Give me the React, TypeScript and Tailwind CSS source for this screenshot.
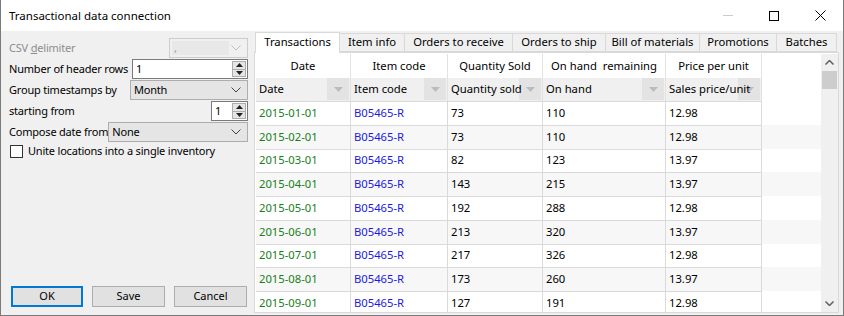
import React from 'react';

const rows = [
  ['2015-01-01', 'B05465-R', '73', '110', '12.98'],
  ['2015-02-01', 'B05465-R', '73', '110', '12.98'],
  ['2015-03-01', 'B05465-R', '82', '123', '13.97'],
  ['2015-04-01', 'B05465-R', '143', '215', '13.97'],
  ['2015-05-01', 'B05465-R', '192', '288', '12.98'],
  ['2015-06-01', 'B05465-R', '213', '320', '13.97'],
  ['2015-07-01', 'B05465-R', '217', '326', '12.98'],
  ['2015-08-01', 'B05465-R', '173', '260', '13.97'],
  ['2015-09-01', 'B05465-R', '127', '191', '12.98'],
];

const cols = [
  { group: 'Date', name: 'Date', w: 'w-[95px]' },
  { group: 'Item code', name: 'Item code', w: 'w-[97px]' },
  { group: 'Quantity Sold', name: 'Quantity sold', w: 'w-[95px]' },
  { group: 'On hand  remaining', name: 'On hand', w: 'w-[123px]' },
  { group: 'Price per unit', name: 'Sales price/unit', w: 'w-[96px]' },
];

const tabs = [
  { label: 'Item info', w: 'w-[65px]' },
  { label: 'Orders to receive', w: 'w-[108px]' },
  { label: 'Orders to ship', w: 'w-[93px]' },
  { label: 'Bill of materials', w: 'w-[94px]' },
  { label: 'Promotions', w: 'w-[77px]' },
  { label: 'Batches', w: 'w-[60px]' },
];

function Chevron({ color = '#444' }: { color?: string }) {
  return (
    <svg width="10" height="6" viewBox="0 0 10 6" fill="none">
      <path d="M0.5 0.5 L5 5 L9.5 0.5" stroke={color} strokeWidth="1" />
    </svg>
  );
}

function Combo({ value, w, disabled }: { value: string; w: string; disabled?: boolean }) {
  if (disabled) {
    return (
      <div className={`${w} h-[20px] border border-[#cccccc] bg-[#f0f0f0] flex items-center pl-[2px] pr-[6px]`}>
        <div className="w-[57px] h-[14px] bg-[#e8e8e8] text-[#a0a0a0] leading-[14px] pl-[2px]">{value}</div>
        <div className="ml-auto">
          <Chevron color="#c0c0c0" />
        </div>
      </div>
    );
  }
  return (
    <div className={`${w} h-[20px] border border-[#adadad] bg-[#e5e5e5] flex items-center pl-[3px] pr-[6px]`}>
      <span>{value}</span>
      <div className="ml-auto">
        <Chevron />
      </div>
    </div>
  );
}

function Spin({ value, w }: { value: string; w: string }) {
  return (
    <div className={`${w} h-[20px] border border-[#7a7a7a] bg-white flex items-center pl-[3px]`}>
      <span>{value}</span>
      <div className="ml-auto h-[16px] w-[14px] mr-[1px] flex flex-col border border-[#adadad] bg-[#e5e5e5]">
        <div className="flex-1 flex items-center justify-center border-b border-[#adadad]">
          <svg width="7" height="4" viewBox="0 0 7 4"><path d="M0 4 L3.5 0 L7 4 Z" fill="#222" /></svg>
        </div>
        <div className="flex-1 flex items-center justify-center">
          <svg width="7" height="4" viewBox="0 0 7 4"><path d="M0 0 L3.5 4 L7 0 Z" fill="#222" /></svg>
        </div>
      </div>
    </div>
  );
}

function FilterBtn() {
  return (
    <div className="absolute right-[1px] top-0 bottom-[1px] w-[22px] bg-[#e3e3e3] flex items-center justify-center">
      <svg width="9" height="5" viewBox="0 0 9 5"><path d="M0 0 L4.5 5 L9 0 Z" fill="#bcbcbc" /></svg>
    </div>
  );
}

export default function App() {
  return (
    <div
      className="w-[844px] h-[316px] flex flex-col bg-[#f0f0f0] border-x border-b border-[#7b7b7b] text-[11.25px] text-black overflow-hidden whitespace-nowrap"
      style={{ fontFamily: '"Segoe UI", "Noto Sans", sans-serif' }}
    >
      {/* Title bar */}
      <div className="h-[31px] shrink-0 bg-white flex items-center">
        <span className="pl-[8px] text-[11.5px]">Transactional data connection</span>
        <div className="ml-auto flex h-full">
          <div className="w-[46px] flex items-center justify-center">
            <svg width="10" height="1"><rect width="10" height="1" fill="#cccccc" /></svg>
          </div>
          <div className="w-[46px] flex items-center justify-center">
            <svg width="10" height="10" viewBox="0 0 10 10"><rect x="0.5" y="0.5" width="9" height="9" fill="none" stroke="#000" /></svg>
          </div>
          <div className="w-[46px] flex items-center justify-center">
            <svg width="11" height="11" viewBox="0 0 11 11"><path d="M0.5 0.5 L10.5 10.5 M10.5 0.5 L0.5 10.5" stroke="#000" strokeWidth="1" /></svg>
          </div>
        </div>
      </div>

      <div className="flex flex-1 min-h-0">
        {/* Left panel */}
        <div className="w-[253px] shrink-0 flex flex-col pl-[8px] pr-[6px] pt-[7px] pb-[6px] text-[11px] tracking-[-0.2px]">
          <div className="flex flex-col gap-[1px]">
            <div className="flex items-center justify-between h-[20px]">
              <span className="text-[#8d8d8d]">
                CSV <span className="underline">d</span>elimiter
              </span>
              <Combo value="," w="w-[79px]" disabled />
            </div>
            <div className="flex items-center justify-between h-[20px]">
              <span>Number of header rows</span>
              <Spin value="1" w="w-[116px]" />
            </div>
            <div className="flex items-center justify-between h-[20px]">
              <span>Group timestamps by</span>
              <Combo value="Month" w="w-[118px]" />
            </div>
            <div className="flex items-center justify-between h-[20px]">
              <span>starting from</span>
              <Spin value="1" w="w-[37px]" />
            </div>
            <div className="flex items-center justify-between h-[20px]">
              <span>Compose date from</span>
              <Combo value="None" w="w-[142px]" />
            </div>
          </div>
          <div className="flex items-center mt-[1px] h-[17px]">
            <div className="w-[13px] h-[13px] border border-[#333] bg-white ml-[1px]" />
            <span className="ml-[5px]">Unite locations into a single inventory</span>
          </div>
          <div className="mt-auto flex gap-[9px] pl-[2px] pb-[2px] tracking-normal">
            <button className="w-[72px] h-[21px] border-2 border-[#0078d7] bg-[#e1e1e1]">OK</button>
            <button className="w-[73px] h-[21px] border border-[#adadad] bg-[#e1e1e1]">Save</button>
            <button className="w-[73px] h-[21px] border border-[#adadad] bg-[#e1e1e1]">Cancel</button>
          </div>
        </div>

        {/* Right tab control */}
        <div className="flex-1 flex flex-col pr-[4px] pb-[2px] min-w-0">
          <div className="flex items-end h-[21px] shrink-0 pl-[1px]">
            <div className="w-[85px] h-[21px] bg-white border border-b-0 border-[#d9d9d9] flex items-center justify-center relative z-10 -mb-px pb-[2px]">
              Transactions
            </div>
            {tabs.map((t) => (
              <div
                key={t.label}
                className={`${t.w} h-[19px] bg-[#f0f0f0] border border-l-0 border-[#d9d9d9] flex items-center justify-center`}
              >
                {t.label}
              </div>
            ))}
          </div>
          <div className="flex-1 min-h-0 bg-white border border-[#d9d9d9] flex pl-[1px] pt-[1px]">
            <div className="flex-1 min-w-0 overflow-hidden">
              {/* group header */}
              <div className="flex h-[24px]">
                {cols.map((c) => (
                  <div key={c.group} className={`${c.w} shrink-0 flex items-center justify-center border-r border-[#e2e2e2] whitespace-pre`}>
                    {c.group}
                  </div>
                ))}
              </div>
              {/* column header */}
              <div className="flex h-[23px]">
                {cols.map((c) => (
                  <div key={c.name} className={`${c.w} shrink-0 relative flex items-center pl-[3px] bg-[#f0f0f0] border-r border-[#e2e2e2]`}>
                    <FilterBtn />
                    <span className="relative z-10">{c.name}</span>
                  </div>
                ))}
              </div>
              {rows.map((r, i) => (
                <div key={i} className={`flex h-[23.75px] ${i % 2 === 1 ? 'bg-[#f7f7f7]' : 'bg-white'}`}>
                  {r.map((v, j) => (
                    <div
                      key={j}
                      className={`${cols[j].w} shrink-0 flex items-center pl-[3px] border-t border-r border-[#dadada] ${
                        j === 0 ? 'text-[#188018]' : j === 1 ? 'text-[#1a1ae6]' : ''
                      }`}
                    >
                      {v}
                    </div>
                  ))}
                </div>
              ))}
            </div>
            {/* scrollbar */}
            <div className="w-[17px] shrink-0 bg-[#f0f0f0] flex flex-col items-center">
              <div className="h-[17px] w-full flex items-center justify-center">
                <svg width="9" height="5" viewBox="0 0 9 5"><path d="M0.5 4.5 L4.5 0.5 L8.5 4.5" stroke="#606060" strokeWidth="1.5" fill="none" /></svg>
              </div>
              <div className="w-[15px] h-[18px] bg-[#cdcdcd]" />
              <div className="mt-auto h-[17px] w-full flex items-center justify-center">
                <svg width="9" height="5" viewBox="0 0 9 5"><path d="M0.5 0.5 L4.5 4.5 L8.5 0.5" stroke="#606060" strokeWidth="1.5" fill="none" /></svg>
              </div>
            </div>
          </div>
        </div>
      </div>
    </div>
  );
}
